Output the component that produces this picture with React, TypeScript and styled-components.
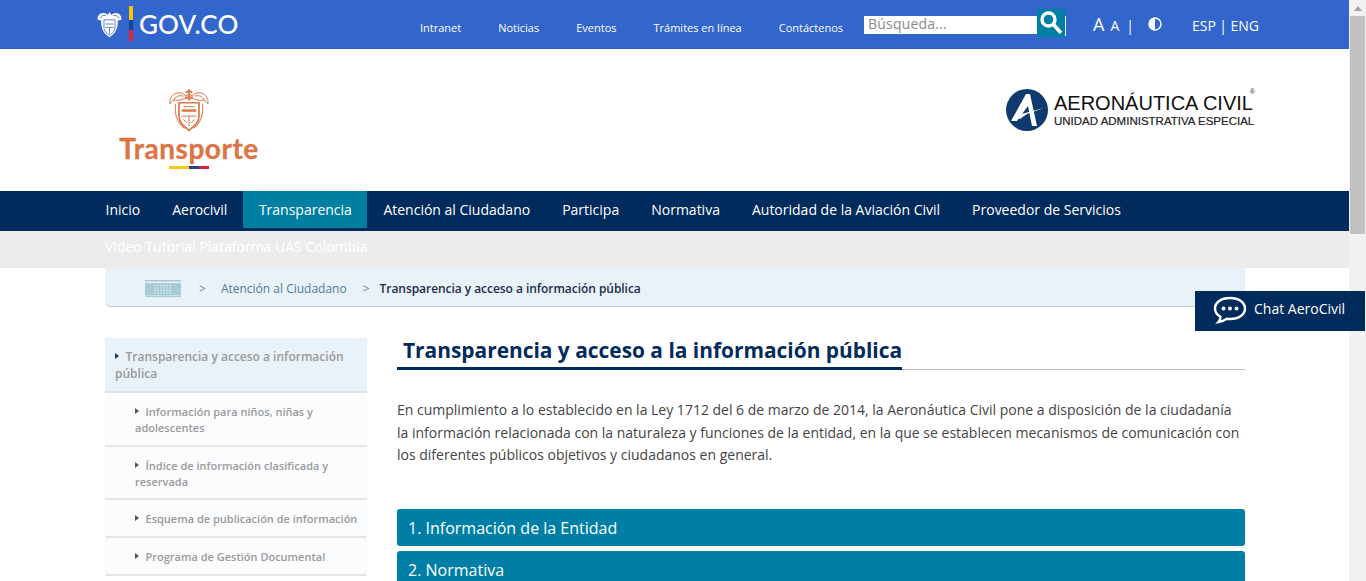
import React from "react";
import styled, { createGlobalStyle } from "styled-components";

const Global = createGlobalStyle`
  html, body { margin: 0; padding: 0; height: 100%; overflow: hidden; background: #fff; }
  body { font-family: "Open Sans", "Liberation Sans", sans-serif; }
  * { box-sizing: border-box; }
`;

const Shell = styled.div`display: flex; width: 1366px; height: 581px; overflow: hidden;`;
const Page = styled.div`width: 1349px; height: 581px; overflow: hidden; flex: none;`;
const ScrollTrack = styled.div`
  width: 17px; height: 581px; background: #f1f1f1; flex: none;
  display: flex; flex-direction: column; align-items: center;
`;
const ScrollArrow = styled.div`
  width: 0; height: 0; margin: 6px 0 5px;
  border-left: 4px solid transparent; border-right: 4px solid transparent; border-bottom: 5px solid #a3a3a3;
`;
const ScrollThumb = styled.div`width: 15px; height: 218px; background: #c1c1c1;`;

const TopBar = styled.header`height: 49px; background: #3366cc; display: flex; position: relative;`;
const GovLogo = styled.div`width: 332px; padding: 6px 0 0 97px; display: flex; align-items: flex-start; flex: none;`;
const FlagBar = styled.div`
  width: 4px; height: 35px; margin: 0 6px 0 7px;
  background: linear-gradient(#f7c600 0 40%, #0b4a9e 40% 70%, #e0243e 70% 100%);
`;
const GovText = styled.span`
  font-family: "Lato", sans-serif; font-size: 26px; line-height: 37px; color: #fff; font-weight: 500; letter-spacing: 0.15px;
`;
const TopNav = styled.nav`display: flex; gap: 37px; padding: 20px 0 0 88px; width: 532px; flex: none;`;
const TopLink = styled.a`font-size: 11px; line-height: 16px; color: #fff; white-space: nowrap;`;
const Search = styled.div`display: flex; align-items: flex-start; padding-top: 9px; flex: none;`;
const SearchInput = styled.div`
  width: 173px; height: 18px; margin-top: 7px; background: #fff; color: #8a8a8a;
  font-size: 14px; line-height: 15px; padding-left: 4px; letter-spacing: 0.2px;
`;
const SearchButton = styled.div`
  width: 28px; height: 28px; background: #007fa6; display: flex; align-items: center; justify-content: center;
`;
const VLine = styled.div`width: 1px; height: 20px; margin-top: 7px; background: #fff;`;
const Tools = styled.div`display: flex; align-items: baseline; color: #fff; padding: 12px 0 0 27px; flex: none;`;
const BigA = styled.span`font-size: 18px; line-height: 24px;`;
const SmallA = styled.span`font-size: 14px; line-height: 24px; margin-left: 6px;`;
const Sep = styled.span`font-size: 14px; margin: 0 0 0 7px; color: #fff;`;
const Lang = styled.div`display: flex; align-items: center; gap: 3.5px; font-size: 14px; color: #fff; line-height: 24px; margin-left: 30px;`;
const Contrast = styled.svg`width: 14px; height: 14px; margin: 0 0 0 14px; align-self: flex-start; position: relative; top: 5px;`;

const Brand = styled.div`
  height: 142px; display: flex; justify-content: space-between; padding: 0 95px 0 119px; background: #fff;
`;
const TransporteBox = styled.div`display: flex; flex-direction: column; align-items: center; width: 140px; padding-top: 39px;`;
const TransporteText = styled.div`
  font-family: "Lato", sans-serif; font-weight: 700; font-size: 28px; line-height: 32px; color: #dc7444; letter-spacing: 0.55px; -webkit-text-stroke: 0.3px #dc7444;
`;
const TriBar = styled.div`
  width: 40px; height: 3px; margin-top: 2px;
  background: linear-gradient(90deg, #fcc80f 0 50%, #1c4597 50% 75%, #d8223f 75% 100%);
`;
const AeroBox = styled.div`display: flex; align-items: flex-start; padding-top: 40px; width: 248px; flex: none;`;
const AeroTextBox = styled.div`margin-left: 6px; position: relative; padding-top: 6px; flex: none; width: 200px;`;
const AeroTitle = styled.div`
  font-family: "Liberation Sans", sans-serif; font-size: 20px; line-height: 17px; color: #111; white-space: nowrap;
`;
const AeroSub = styled.div`
  font-family: "Liberation Sans", sans-serif; font-size: 11.5px; line-height: 13px; margin-top: 3px; color: #222; white-space: nowrap; font-weight: 400; -webkit-text-stroke: 0.2px #222;
`;
const Reg = styled.span`position: absolute; right: -1px; top: -1px; font-size: 7px; line-height: 7px; color: #333; font-family: "Liberation Sans", sans-serif;`;

const MainNav = styled.nav`height: 40px; background: #002b5c; display: flex; padding-left: 89.5px;`;
const NavItem = styled.a<{ $active?: boolean }>`
  height: 37px; padding: 0 ${(p) => (p.$active ? "15.5px" : "16px")}; font-size: 14px; line-height: 37px; color: #fff; white-space: nowrap;
  background: ${(p) => (p.$active ? "#007fa3" : "transparent")};
`;
const Strip = styled.div`
  height: 37px; background: #ececec; color: #fff; font-size: 14px; line-height: 32px; padding-left: 105px;
`;
const Crumbs = styled.div`
  width: 1140px; height: 39px; margin-left: 105px; background: #e9f1f9; border-bottom: 1px solid #c9c9c9; border-radius: 0 0 5px 5px;
  display: flex; align-items: center; font-size: 12px; padding: 2px 0 0 40px; color: #4d7e93;
`;
const CrumbSep = styled.span<{ $l: number; $r: number }>`margin: 0 ${(p) => p.$r}px 0 ${(p) => p.$l}px; color: #6b8894; font-size: 12px;`;
const CrumbCurrent = styled.span`color: #1d2c48; font-weight: 600; letter-spacing: -0.05px;`;

const Body = styled.div`display: flex; margin: 31px 0 0 105px; gap: 30px; align-items: flex-start;`;
const Side = styled.aside`width: 262px; flex: none; color: #9a9a9a; font-weight: 600;`;
const SideHead = styled.div`
  background: #e9f1f9; border-bottom: 2px solid #dfe3e6; padding: 10px; font-size: 12px; line-height: 17px; height: 55px;
`;
const SideItem = styled.div<{ $h: number }>`
  background: #fbfcfe; border-bottom: 2px solid #e2e4e6; padding: 11px 6px 0 30px; font-size: 11px; line-height: 16px; height: ${(p) => p.$h}px;
`;
const Tri = styled.span<{ $dark?: boolean }>`
  display: inline-block; width: 0; height: 0; vertical-align: 2px; margin-right: 6.5px;
  border-top: 3px solid transparent; border-bottom: 3px solid transparent;
  border-left: 4px solid ${(p) => (p.$dark ? "#1d3557" : "#555")};
`;

const Content = styled.main`width: 848px; flex: none;`;
const TitleRow = styled.div`border-bottom: 1px solid #bdbdbd; height: 32px;`;
const Title = styled.h1`
  display: inline-block; margin: 0; height: 32px; padding: 0 0 0 6px; font-size: 20.9px; line-height: 24px; font-weight: 700;
  color: #002b5c; border-bottom: 3px solid #002b5c; white-space: nowrap;
`;
const Intro = styled.p`
  margin: 29px 0 0; font-size: 14px; line-height: 22.5px; color: #444; width: 848px;
`;
const Accordion = styled.div`
  height: 37px; background: #007fa6; color: #fff; font-size: 16px; line-height: 39px; padding-left: 11px; border-radius: 3px; margin-bottom: 5px;
`;
const Accordions = styled.div`margin-top: 42px;`;

const Chat = styled.div`
  position: fixed; left: 1195px; top: 291px; width: 170px; height: 40px; background: #002b5c; color: #fff;
  display: flex; align-items: center; font-size: 14px; padding: 0 0 2px 18px; gap: 7px; white-space: nowrap;
`;
const ChatLabel = styled.span`margin-bottom: 3px;`;

const Arms = ({ c }: { c: string }) => (
  <g fill="none" stroke={c} strokeWidth="0.9" strokeLinejoin="round">
    <path d="M1 14 C0 8 4 4 9 4 C12 4 14 5 15 7 L18 5 L21 7 C22 5 24 4 27 4 C32 4 36 8 35 14 C33 11 31 10 28 11 L24 10 C22 9 20 9 18 10 C16 9 14 9 12 10 L8 11 C5 10 3 11 1 14 Z" />
    <path d="M4 11 C6 7 9 6 13 7 M32 11 C30 7 27 6 23 7" />
    <path d="M18 1 V11 M15 4 L18 2 L21 4 M14.5 8 H21.5" strokeWidth="1.5" />
    <path d="M9 13 H27 V25 C27 32 22 34 18 38 C14 34 9 32 9 25 Z" strokeWidth="1.5" />
    <path d="M6 14 C5 22 6 30 14 36 M30 14 C31 22 30 30 22 36" />
    <path d="M11.5 20 H24.5" strokeWidth="2.2" />
    <path d="M11.5 25 H24.5 M18 25 V34 M13 16.5 H23" />
    <path d="M13 28 L16 31 M23 28 L20 31" />
  </g>
);

export default function App() {
  return (
    <Shell>
      <Global />
      <Page>
        <TopBar>
          <GovLogo>
            <svg width="25" height="28" viewBox="0 0 36 40" style={{ marginTop: 4, flex: "none" }}>
              <path d="M1 14 C0 8 4 4 9 4 C12 4 14 5 15 7 L18 3 L21 7 C22 5 24 4 27 4 C32 4 36 8 35 14 L30 15 C30 24 29 32 18 39 C7 32 6 24 6 15 Z" fill="#fff" />
              <path d="M10 14 H26 V25 C26 31 22 33 18 36 C14 33 10 31 10 25 Z M4 12 C6 8 9 7 13 8 M32 12 C30 8 27 7 23 8 M12 20 H24 M12 25 H24 M18 25 V34" fill="none" stroke="#3366cc" strokeWidth="1.1" />
            </svg>
            <FlagBar />
            <GovText>GOV.CO</GovText>
          </GovLogo>
          <TopNav>
            <TopLink>Intranet</TopLink>
            <TopLink>Noticias</TopLink>
            <TopLink>Eventos</TopLink>
            <TopLink>Trámites en línea</TopLink>
            <TopLink>Contáctenos</TopLink>
          </TopNav>
          <Search>
            <SearchInput>Búsqueda...</SearchInput>
            <SearchButton>
              <svg width="24" height="26" viewBox="0 0 24 26" fill="none" stroke="#fff">
                <circle cx="9.5" cy="9.5" r="6.5" strokeWidth="3.4" />
                <path d="M14 14 L22 23" strokeWidth="3.6" />
              </svg>
            </SearchButton>
            <VLine />
          </Search>
          <Tools>
            <BigA>A</BigA>
            <SmallA>A</SmallA>
            <Sep>|</Sep>
            <Contrast viewBox="0 0 14 14">
              <circle cx="7" cy="7" r="6" fill="#3366cc" stroke="#fff" strokeWidth="1.4" />
              <path d="M7 1 A6 6 0 0 0 7 13 Z" fill="#fff" />
            </Contrast>
            <Lang>
              <span>ESP</span>
              <span>|</span>
              <span>ENG</span>
            </Lang>
          </Tools>
        </TopBar>

        <Brand>
          <TransporteBox>
            <svg width="40" height="44" viewBox="0 0 36 39" style={{ flex: "none" }}>
              <Arms c="#dc7444" />
            </svg>
            <TransporteText>Transporte</TransporteText>
            <TriBar />
          </TransporteBox>
          <AeroBox>
            <svg width="42" height="42" viewBox="0 0 42 42" style={{ flex: "none" }}>
              <circle cx="21" cy="21" r="21" fill="#0f3a6e" />
              <path d="M5 32 L20 5 L24 5 L31 37 L26 37 L22 17 L11 32 Z" fill="#fff" />
              <path d="M8 27 L38 19 L21 25 L14 30 Z" fill="#fff" />
            </svg>
            <AeroTextBox>
              <AeroTitle>AERONÁUTICA CIVIL</AeroTitle>
              <AeroSub>UNIDAD ADMINISTRATIVA ESPECIAL</AeroSub>
              <Reg>®</Reg>
            </AeroTextBox>
          </AeroBox>
        </Brand>

        <MainNav>
          <NavItem>Inicio</NavItem>
          <NavItem>Aerocivil</NavItem>
          <NavItem $active>Transparencia</NavItem>
          <NavItem>Atención al Ciudadano</NavItem>
          <NavItem>Participa</NavItem>
          <NavItem>Normativa</NavItem>
          <NavItem>Autoridad de la Aviación Civil</NavItem>
          <NavItem>Proveedor de Servicios</NavItem>
        </MainNav>
        <Strip>Video Tutorial Plataforma UAS Colombia</Strip>

        <Crumbs>
          <svg width="36" height="17" viewBox="0 0 36 17" style={{ flex: "none" }}>
            <rect x="0" y="0" width="36" height="1.5" fill="#a7cbd6" />
            <rect x="0" y="3" width="36" height="12" fill="#a7cbd6" />
            <rect x="0" y="15.5" width="36" height="1.5" fill="#a7cbd6" />
            <path d="M9 5.5 H27 M9 8 H27 M9 10.5 H27 M9 13 H27" stroke="#dfeaf0" strokeWidth="1" strokeDasharray="2 1" />
          </svg>
          <CrumbSep $l={18} $r={15}>&gt;</CrumbSep>
          <span>Atención al Ciudadano</span>
          <CrumbSep $l={16} $r={10}>&gt;</CrumbSep>
          <CrumbCurrent>Transparencia y acceso a información pública</CrumbCurrent>
        </Crumbs>

        <Body>
          <Side>
            <SideHead>
              <Tri $dark />Transparencia y acceso a información pública
            </SideHead>
            <SideItem $h={54}><Tri />Información para niños, niñas y adolescentes</SideItem>
            <SideItem $h={53}><Tri />Índice de información clasificada y reservada</SideItem>
            <SideItem $h={38}><Tri />Esquema de publicación de información</SideItem>
            <SideItem $h={38}><Tri />Programa de Gestión Documental</SideItem>
          </Side>
          <Content>
            <TitleRow>
              <Title>Transparencia y acceso a la información pública</Title>
            </TitleRow>
            <Intro>
              En cumplimiento a lo establecido en la Ley 1712 del 6 de marzo de 2014, la Aeronáutica Civil pone a disposición de la ciudadanía la información relacionada con la naturaleza y funciones de la entidad, en la que se establecen mecanismos de comunicación con los diferentes públicos objetivos y ciudadanos en general.
            </Intro>
            <Accordions>
              <Accordion>1. Información de la Entidad</Accordion>
              <Accordion>2. Normativa</Accordion>
            </Accordions>
          </Content>
        </Body>
      </Page>
      <ScrollTrack>
        <ScrollArrow />
        <ScrollThumb />
      </ScrollTrack>
      <Chat>
        <svg width="34" height="28" viewBox="0 0 34 28" fill="none" style={{ flex: "none" }}>
          <path d="M17 2 C8 2 2 6.5 2 12.5 C2 16 4 18.8 7.5 20.8 C7.5 22.5 7 24.5 5.5 26 C9 25.5 11.5 24.5 13.5 22.8 C14.6 23 15.8 23 17 23 C26 23 32 18.5 32 12.5 C32 6.5 26 2 17 2 Z" stroke="#fff" strokeWidth="2.4" />
          <circle cx="10.5" cy="12.5" r="2" fill="#fff" />
          <circle cx="17" cy="12.5" r="2" fill="#fff" />
          <circle cx="23.5" cy="12.5" r="2" fill="#fff" />
        </svg>
        <ChatLabel>Chat AeroCivil</ChatLabel>
      </Chat>
    </Shell>
  );
}
